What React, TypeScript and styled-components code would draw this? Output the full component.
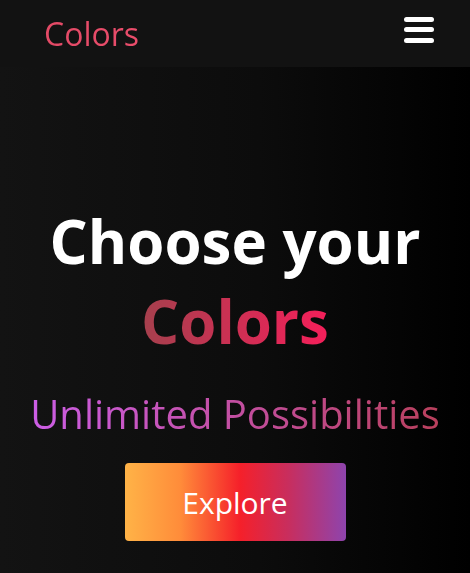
import React from 'react';
import styled, { createGlobalStyle } from 'styled-components';

const GlobalStyle = createGlobalStyle`
    html, body {
        margin: 0;
        padding: 0;
        background: #000000;
        font-family: 'Open Sans', 'Liberation Sans', sans-serif;
    }
`;

const Page = styled.div`
    width: 470px;
    height: 573px;
    display: flex;
    flex-direction: column;
    background: linear-gradient(to right, #131313 0%, #0c0c0c 55%, #000000 100%);
    overflow: hidden;
`;

const NavBar = styled.header`
    height: 67px;
    background: #121212;
    display: flex;
    align-items: center;
    justify-content: space-between;
    padding: 0 36px 0 44px;
    flex-shrink: 0;
`;

const Logo = styled.div`
    font-size: 32px;
    font-weight: 400;
    background: linear-gradient(to right, #e34a66, #ea4d6b);
    -webkit-background-clip: text;
    background-clip: text;
    color: transparent;
    line-height: 1;
    margin-top: 1px;
`;

const MenuButton = styled.button`
    width: 30px;
    height: 26px;
    padding: 0;
    border: none;
    background: none;
    display: flex;
    flex-direction: column;
    justify-content: space-between;
    margin-top: -8px;
`;

const MenuBar = styled.span`
    display: block;
    height: 5px;
    border-radius: 3px;
    background: #ffffff;
`;

const Hero = styled.main`
    flex: 1;
    display: flex;
    flex-direction: column;
    align-items: center;
    padding-top: 134px;
`;

const Title = styled.h1`
    margin: 0;
    font-size: 60px;
    font-weight: 700;
    line-height: 80px;
    color: #ffffff;
    text-align: center;
`;

const GradientWord = styled.span<{ $from: string; $to: string }>`
    background: linear-gradient(to right, ${p => p.$from}, ${p => p.$to});
    -webkit-background-clip: text;
    background-clip: text;
    color: transparent;
`;

const Subtitle = styled.p`
    margin: 29px 0 0;
    font-size: 40px;
    font-weight: 400;
    line-height: 1.2;
`;

const ExploreButton = styled.button`
    margin-top: 25px;
    width: 221px;
    height: 78px;
    border: none;
    border-radius: 4px;
    background: linear-gradient(to right, #ffb347 0%, #ff8c3a 25%, #f5202a 52%, #c82e5e 74%, #8e44ad 100%);
    color: #ffffff;
    font-family: 'Open Sans', 'Liberation Sans', sans-serif;
    font-size: 30px;
    font-weight: 400;
    cursor: pointer;
`;

export default function App() {
    return (
        <>
            <GlobalStyle />
            <Page>
                <NavBar>
                    <Logo>Colors</Logo>
                    <MenuButton aria-label="Menu">
                        <MenuBar />
                        <MenuBar />
                        <MenuBar />
                    </MenuButton>
                </NavBar>
                <Hero>
                    <Title>
                        Choose your
                        <br />
                        <GradientWord $from="#a5404d" $to="#f51f5a">Colors</GradientWord>
                    </Title>
                    <Subtitle>
                        <GradientWord $from="#cc5ee6" $to="#b9405c">Unlimited Possibilities</GradientWord>
                    </Subtitle>
                    <ExploreButton>Explore</ExploreButton>
                </Hero>
            </Page>
        </>
    );
}
